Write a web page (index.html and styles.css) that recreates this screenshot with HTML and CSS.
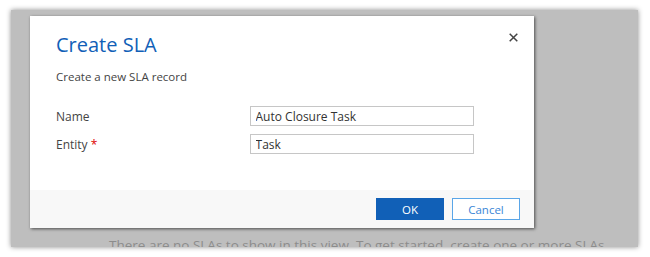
FILE: index.html
```html
<!DOCTYPE html>
<html lang="en">

<head>
    <meta charset="UTF-8">
    <meta name="viewport" content="width=device-width, initial-scale=1.0">
    <title>Create SLA</title>
    <link rel="stylesheet" href="styles.css">
</head>

<body>
    <div class="page">
        <div class="dialog">
            <div class="dialog-body">
                <button class="close" title="Close">
                    <svg width="9" height="9" viewBox="0 0 9 9">
                        <path d="M0.7 0.7 L8.3 8.3 M8.3 0.7 L0.7 8.3" stroke="#444" stroke-width="1.5" fill="none" />
                    </svg>
                </button>
                <h1 class="title">Create SLA</h1>
                <p class="subtitle">Create a new SLA record</p>

                <div class="form-row">
                    <label for="name">Name</label>
                    <input type="text" id="name" value="Auto Closure Task">
                </div>
                <div class="form-row">
                    <label for="entity">Entity <span class="required">*</span></label>
                    <input type="text" id="entity" value="Task">
                </div>
            </div>

            <div class="dialog-footer">
                <button class="button primary">OK</button>
                <button class="button secondary">Cancel</button>
            </div>
        </div>

        <p class="empty">There are no SLAs to show in this view. To get started, create one or more SLAs.</p>
    </div>
</body>

</html>
```

FILE: styles.css
```css
body {
    margin: 0;
    padding: 10px 12px 10px 11px;
    background-color: #fff;
    font-family: "Segoe UI", "Open Sans", sans-serif;
}

.page {
    height: 237px;
    padding: 6px 0 0 19px;
    box-sizing: border-box;
    background-color: #bebebe;
    overflow: hidden;
    box-shadow: 0 0 5px rgba(0, 0, 0, 0.45);
}

.dialog {
    position: relative;
    z-index: 1;
    width: 504px;
    height: 212px;
    background-color: #fff;
    box-shadow: 1px 1px 3px rgba(0, 0, 0, 0.6);
    display: flex;
    flex-direction: column;
}

.dialog-body {
    position: relative;
    flex: 1;
    padding: 15px 60px 0 26px;
}

.close {
    position: absolute;
    top: 17px;
    right: 16px;
    padding: 0;
    border: none;
    background: none;
    line-height: 0;
    cursor: pointer;
}

.title {
    margin: 0;
    font-size: 20px;
    font-weight: normal;
    line-height: 28px;
    color: #1160b7;
}

.subtitle {
    margin: 10px 0 21px;
    font-size: 11.5px;
    line-height: 16px;
    color: #444;
}

.form-row {
    display: flex;
    align-items: center;
    margin-bottom: 8px;
}

.form-row label {
    width: 194px;
    font-size: 12px;
    color: #444;
}

.required {
    color: #d00;
}

.form-row input {
    width: 225px;
    height: 20px;
    box-sizing: border-box;
    padding: 0 5px;
    border: 1px solid #c6c6c6;
    font-family: inherit;
    font-size: 12px;
    color: #333;
}

.dialog-footer {
    height: 38px;
    padding: 8px 14px 0 0;
    box-sizing: border-box;
    background-color: #f8f8f8;
    display: flex;
    justify-content: flex-end;
    align-items: flex-start;
    gap: 8px;
}

.button {
    width: 68px;
    height: 22px;
    padding: 0;
    font-family: inherit;
    font-size: 11.5px;
    cursor: pointer;
}

.button.primary {
    background-color: #1160b7;
    border: 1px solid #1160b7;
    color: #fff;
}

.button.secondary {
    background-color: #fff;
    border: 1px solid #5aa6e8;
    color: #3a86d6;
}

.empty {
    margin: 8px 0 0 79px;
    font-size: 13.5px;
    line-height: 18px;
    color: #8c8c8c;
    white-space: nowrap;
}
```
